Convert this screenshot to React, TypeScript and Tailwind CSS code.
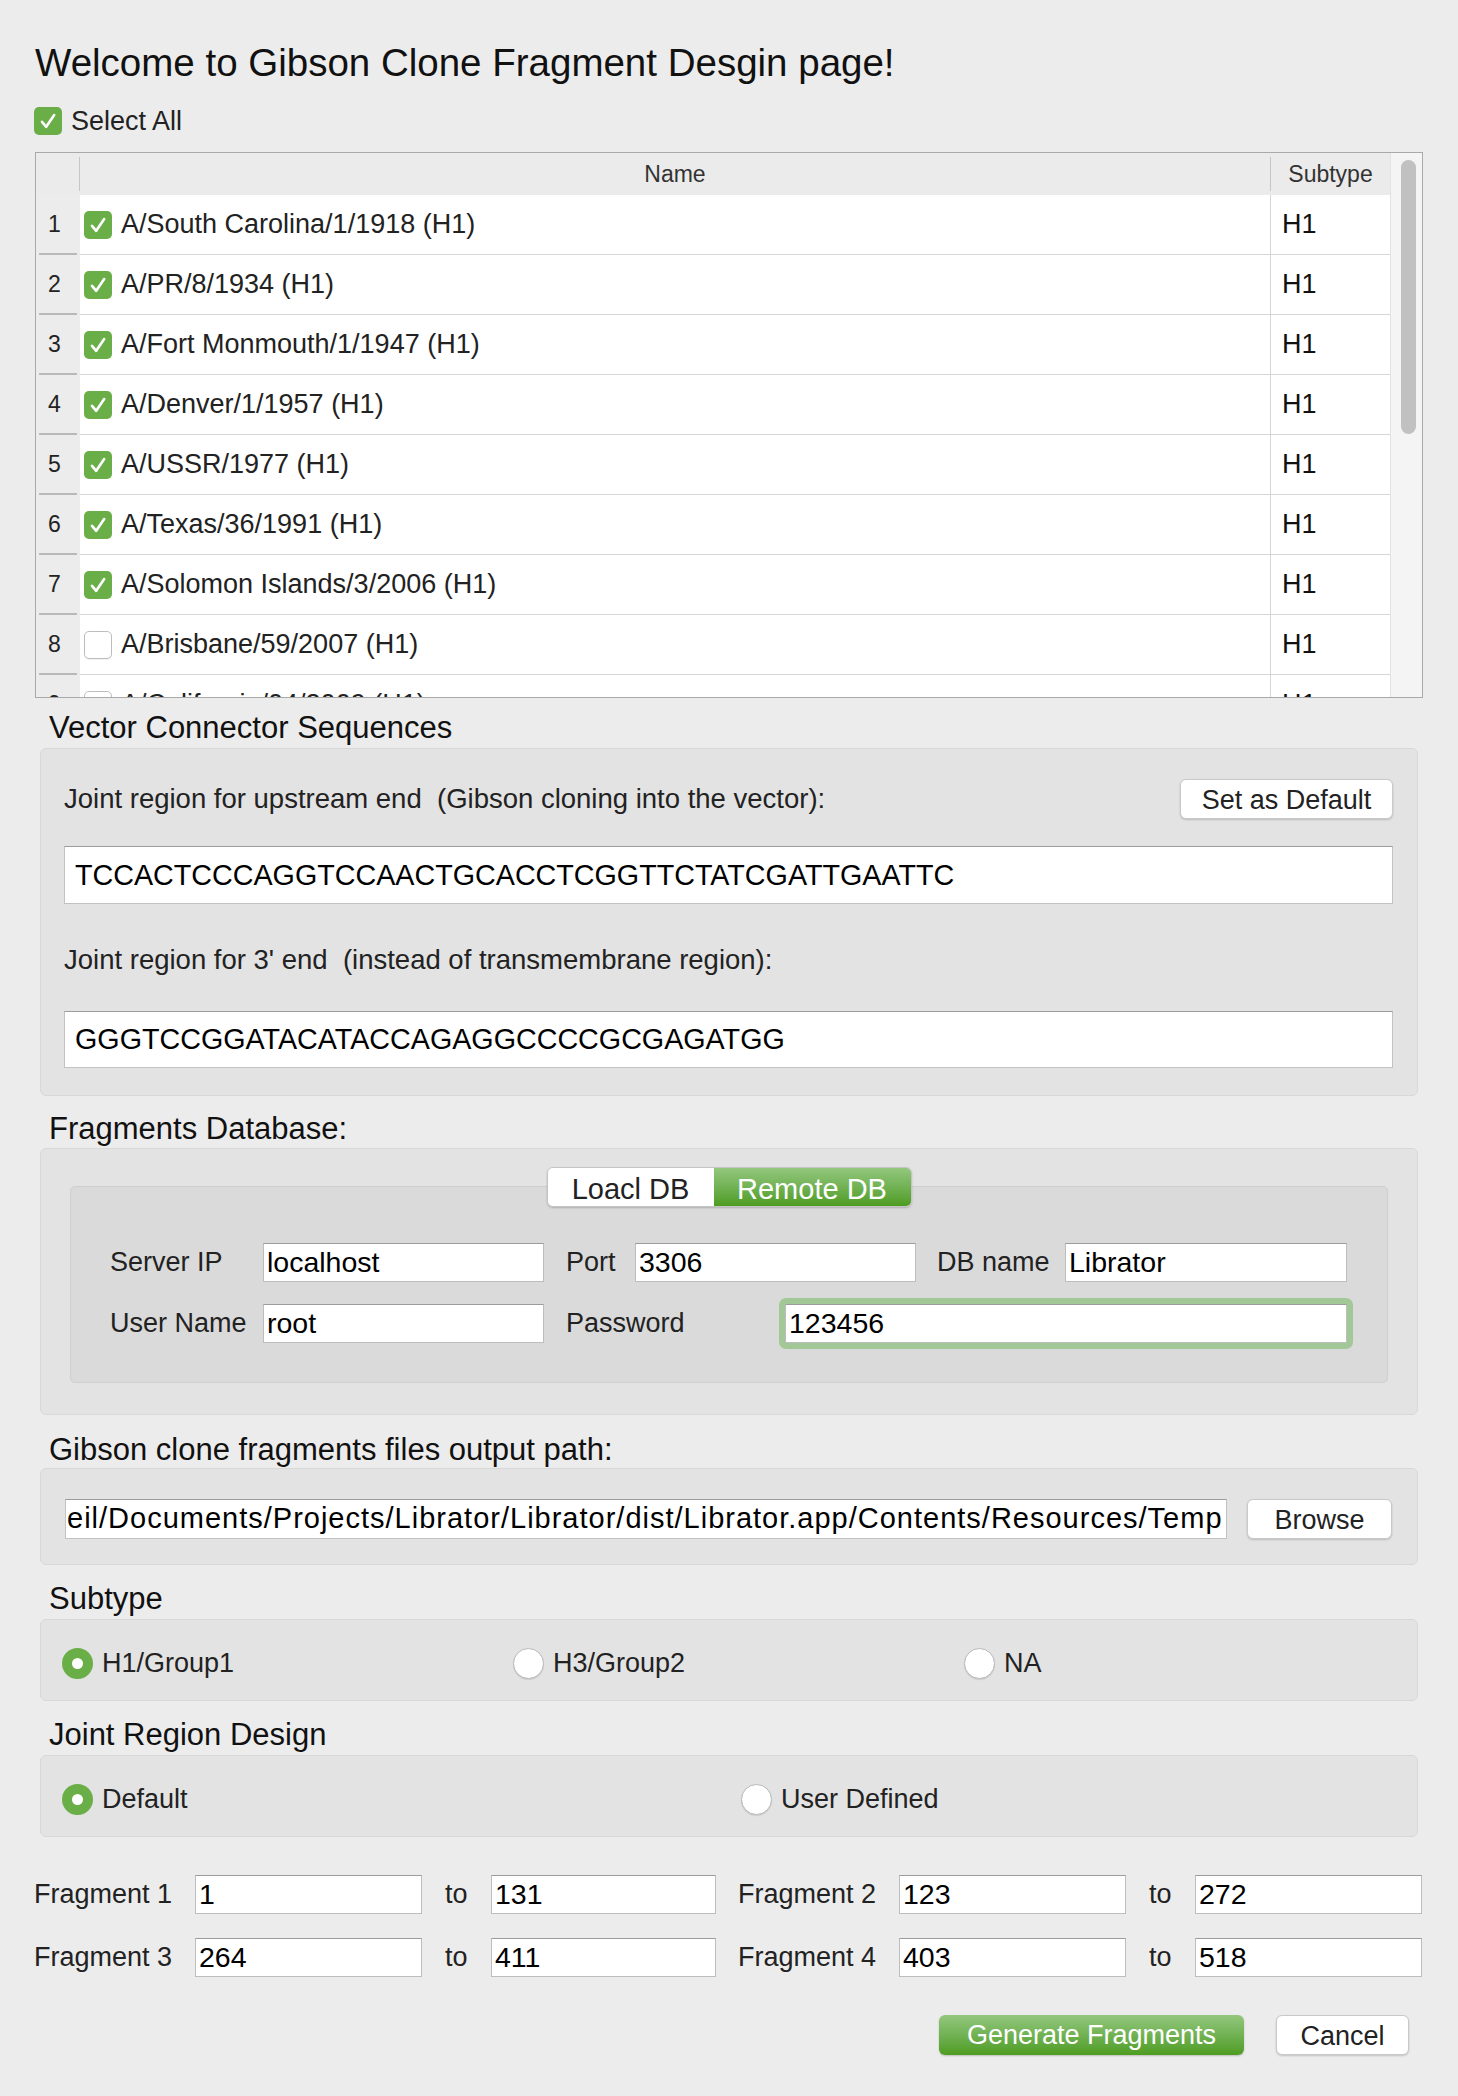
import { useState } from "react";

const strains = [
  { name: "A/South Carolina/1/1918 (H1)", on: true },
  { name: "A/PR/8/1934 (H1)", on: true },
  { name: "A/Fort Monmouth/1/1947 (H1)", on: true },
  { name: "A/Denver/1/1957 (H1)", on: true },
  { name: "A/USSR/1977 (H1)", on: true },
  { name: "A/Texas/36/1991 (H1)", on: true },
  { name: "A/Solomon Islands/3/2006 (H1)", on: true },
  { name: "A/Brisbane/59/2007 (H1)", on: false },
  { name: "A/California/04/2009 (H1)", on: false },
];

const field =
  "h-[39px] border border-[#bdbdbd] border-t-[#9c9c9c] bg-white px-[3px] text-[28.5px] leading-[37px] text-black outline-none";
const box = "rounded-[6px] border border-[#d8d8d8] bg-[#e3e3e3]";
const heading = "h-[36px] pl-[49px] text-[31px] leading-[36px] text-[#111]";
const whiteBtn =
  "rounded-[6px] border border-[#c9c9c9] bg-white text-[27px] text-[#222] shadow-[0_1px_2px_rgba(0,0,0,0.18)]";
const greenFill = "bg-linear-to-b from-[#93c77d] to-[#4e9c1e] text-white";

function Check({ on }: { on: boolean }) {
  if (!on)
    return (
      <span className="h-[28px] w-[28px] shrink-0 rounded-[5px] border border-[#bdbdbd] bg-white shadow-[0_1px_1px_rgba(0,0,0,0.06)]" />
    );
  return (
    <span className="flex h-[28px] w-[28px] shrink-0 items-center justify-center rounded-[5px] bg-[#6aae48]">
      <svg viewBox="0 0 28 28" className="h-[28px] w-[28px]">
        <path
          d="M8 14.8l4.2 5L20.2 8"
          fill="none"
          stroke="white"
          strokeWidth="2.6"
          strokeLinecap="round"
          strokeLinejoin="round"
        />
      </svg>
    </span>
  );
}

function Radio({ on, label }: { on: boolean; label: string }) {
  return (
    <div className="flex h-[31px] items-center gap-[9px]">
      {on ? (
        <span className="flex h-[31px] w-[31px] shrink-0 items-center justify-center rounded-full bg-[#6aae48]">
          <span className="h-[11px] w-[11px] rounded-full bg-white" />
        </span>
      ) : (
        <span className="h-[31px] w-[31px] shrink-0 rounded-full border border-[#b9b9b9] bg-white shadow-[0_1px_1px_rgba(0,0,0,0.1)]" />
      )}
      <span className="text-[27px] text-[#222]">{label}</span>
    </div>
  );
}

function Input({ value, w }: { value: string; w: string }) {
  return <input readOnly value={value} className={`${field} ${w}`} />;
}

export default function App() {
  const [remote, setRemote] = useState(true);
  const [subtype, setSubtype] = useState("H1/Group1");
  const [joint, setJoint] = useState("Default");

  return (
    <div className="min-h-[2096px] bg-[#ececec] pt-[41px] font-['Liberation_Sans',Arial,sans-serif] text-[#222]">
      <h1 className="h-[44px] pl-[35px] text-[38.5px] leading-[44px] text-[#111]">
        Welcome to Gibson Clone Fragment Desgin page!
      </h1>

      <div className="mt-[22px] flex h-[28px] items-center gap-[9px] pl-[34px]">
        <Check on />
        <span className="text-[27px]">Select All</span>
      </div>

      {/* strain table */}
      <div className="mx-[35px] mt-[17px] flex h-[546px] overflow-hidden border border-[#a9a9a9]">
        <div className="flex min-w-0 flex-1 flex-col">
          <div className="flex h-[42px] shrink-0 items-center bg-[#ebebeb] text-[23px] text-[#333]">
            <span className="w-[43px]" />
            <span className="h-[34px] w-px bg-[#c6c6c6]" />
            <span className="flex-1 text-center">Name</span>
            <span className="h-[34px] w-px bg-[#c6c6c6]" />
            <span className="w-[119px] text-center">Subtype</span>
          </div>
          {strains.map((s, i) => (
            <div key={s.name} className="flex h-[60px] shrink-0">
              <div className="flex w-[44px] flex-col">
                <span className="flex flex-1 items-center pl-[12px] text-[23px] text-[#222]">
                  {i + 1}
                </span>
                <span className="mx-[3px] h-[2px] bg-[#b9b9b9]" />
              </div>
              <div className="flex flex-1 items-center gap-[9px] border-b border-[#d6d6d6] bg-white pl-[4px]">
                <Check on={s.on} />
                <span className="text-[27px]">{s.name}</span>
              </div>
              <div className="flex w-[120px] items-center border-b border-l border-[#d6d6d6] bg-white pl-[11px] text-[27px] text-[#111]">
                H1
              </div>
            </div>
          ))}
        </div>
        <div className="w-[32px] shrink-0 border-l border-[#e2e2e2] bg-[#f4f4f4] pl-[10px] pt-[7px]">
          <div className="h-[274px] w-[15px] rounded-full bg-[#c1c1c1]" />
        </div>
      </div>

      <h2 className={`mt-[12px] ${heading}`}>Vector Connector Sequences</h2>
      <div className={`mx-[40px] mt-[2px] px-[23px] pb-[27px] pr-[24px] pt-[30px] ${box}`}>
        <div className="flex h-[40px] items-center justify-between">
          <span className="text-[27.5px]">
            Joint region for upstream end&nbsp; (Gibson cloning into the vector):
          </span>
          <button className={`h-[40px] w-[213px] ${whiteBtn}`}>Set as Default</button>
        </div>
        <input
          readOnly
          value="TCCACTCCCAGGTCCAACTGCACCTCGGTTCTATCGATTGAATTC"
          className="mt-[27px] block h-[58px] w-full border border-[#c2c2c2] border-t-[#9c9c9c] bg-white px-[10px] text-[28.7px] text-black outline-none"
        />
        <div className="mt-[36px] flex h-[40px] items-center text-[27.5px]">
          Joint region for 3' end&nbsp; (instead of transmembrane region):
        </div>
        <input
          readOnly
          value="GGGTCCGGATACATACCAGAGGCCCCGCGAGATGG"
          className="mt-[31px] block h-[57px] w-full border border-[#c2c2c2] border-t-[#9c9c9c] bg-white px-[10px] text-[28.7px] text-black outline-none"
        />
      </div>

      <h2 className={`mt-[15px] ${heading}`}>Fragments Database:</h2>
      <div className={`mx-[40px] mt-[1px] px-[29px] pb-[31px] pt-[18px] ${box}`}>
        <div className="relative z-10 flex justify-center">
          <div className="flex h-[40px] overflow-hidden rounded-[6px] border border-[#c4c4c4] shadow-[0_1px_2px_rgba(0,0,0,0.2)]">
            <button
              onClick={() => setRemote(false)}
              className={`w-[166px] text-[29px] ${remote ? "bg-white text-[#222]" : greenFill}`}
            >
              Loacl DB
            </button>
            <button
              onClick={() => setRemote(true)}
              className={`w-[197px] text-[29px] ${remote ? greenFill : "bg-white text-[#222]"}`}
            >
              Remote DB
            </button>
          </div>
        </div>
        <div className="-mt-[21px] rounded-[5px] border border-[#cfcfcf] bg-[#dadada] pb-[33px] pl-[39px] pt-[56px]">
          <div className="flex h-[39px] items-center text-[27px]">
            <span className="w-[153px]">Server IP</span>
            <Input value="localhost" w="w-[281px]" />
            <span className="ml-[22px] w-[69px]">Port</span>
            <Input value="3306" w="w-[281px]" />
            <span className="ml-[21px] w-[128px]">DB name</span>
            <Input value="Librator" w="w-[282px]" />
          </div>
          <div className="mt-[16px] flex h-[51px] items-center text-[27px]">
            <span className="w-[153px]">User Name</span>
            <Input value="root" w="w-[281px]" />
            <span className="ml-[22px] w-[213px]">Password</span>
            <div className="w-[574px] rounded-[7px] bg-[#a3c897] p-[6px]">
              <Input value="123456" w="w-full block" />
            </div>
          </div>
        </div>
      </div>

      <h2 className={`mt-[17px] ${heading}`}>Gibson clone fragments files output path:</h2>
      <div className={`mx-[40px] flex items-center gap-[20px] pb-[25px] pl-[24px] pr-[25px] pt-[30px] ${box}`}>
        <input
          readOnly
          value="eil/Documents/Projects/Librator/Librator/dist/Librator.app/Contents/Resources/Temp"
          className="h-[40px] min-w-0 flex-1 border border-[#c2c2c2] border-t-[#9c9c9c] bg-white px-[1px] text-[29px] tracking-[1px] text-black outline-none"
        />
        <button className={`h-[40px] w-[145px] shrink-0 ${whiteBtn}`}>Browse</button>
      </div>

      <h2 className={`mt-[16px] ${heading}`}>Subtype</h2>
      <div className={`mx-[40px] mt-[2px] grid grid-cols-[451px_451px_1fr] pb-[21px] pl-[21px] pt-[28px] ${box}`}>
        {["H1/Group1", "H3/Group2", "NA"].map((s) => (
          <div key={s} onClick={() => setSubtype(s)}>
            <Radio on={subtype === s} label={s} />
          </div>
        ))}
      </div>

      <h2 className={`mt-[16px] ${heading}`}>Joint Region Design</h2>
      <div className={`mx-[40px] mt-[2px] grid grid-cols-[679px_1fr] pb-[21px] pl-[21px] pt-[28px] ${box}`}>
        {["Default", "User Defined"].map((s) => (
          <div key={s} onClick={() => setJoint(s)}>
            <Radio on={joint === s} label={s} />
          </div>
        ))}
      </div>

      {[
        ["Fragment 1", "1", "131", "Fragment 2", "123", "272"],
        ["Fragment 3", "264", "411", "Fragment 4", "403", "518"],
      ].map((r, i) => (
        <div
          key={r[0]}
          className={`flex h-[39px] items-center pl-[34px] text-[27px] ${i === 0 ? "mt-[38px]" : "mt-[24px]"}`}
        >
          <span className="w-[161px]">{r[0]}</span>
          <Input value={r[1]} w="w-[227px]" />
          <span className="ml-[23px] w-[46px]">to</span>
          <Input value={r[2]} w="w-[225px]" />
          <span className="ml-[22px] w-[161px]">{r[3]}</span>
          <Input value={r[4]} w="w-[227px]" />
          <span className="ml-[23px] w-[46px]">to</span>
          <Input value={r[5]} w="w-[227px]" />
        </div>
      ))}

      <div className="mt-[38px] flex justify-end gap-[32px] pr-[49px]">
        <button
          className={`h-[40px] w-[305px] rounded-[6px] text-[27px] shadow-[0_1px_2px_rgba(0,0,0,0.2)] ${greenFill}`}
        >
          Generate Fragments
        </button>
        <button className={`h-[40px] w-[133px] ${whiteBtn}`}>Cancel</button>
      </div>
    </div>
  );
}
